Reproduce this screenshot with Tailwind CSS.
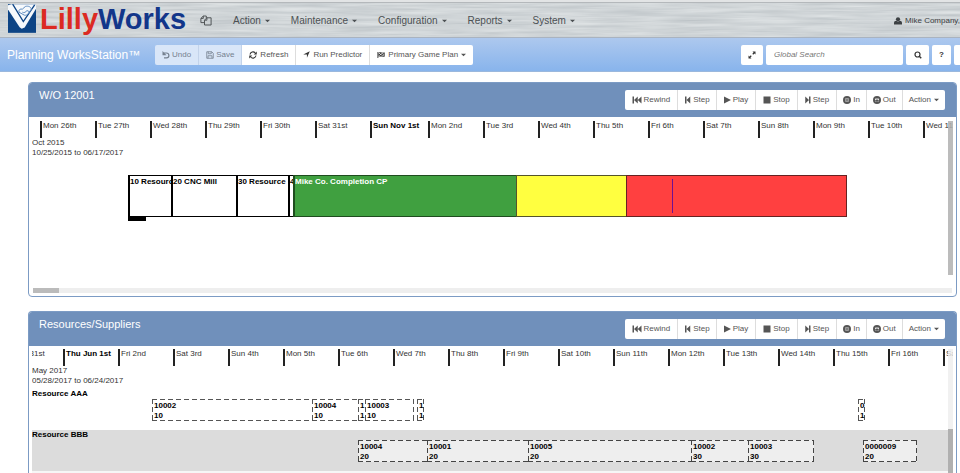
<!DOCTYPE html>
<html lang="en">
<head>
    <meta charset="UTF-8">
    <meta name="viewport" content="width=device-width, initial-scale=1.0">
    <title>LillyWorks - Planning WorksStation</title>
    <script src="https://cdn.jsdelivr.net/npm/@tailwindcss/browser@4"></script>
</head>

<body class="bg-white text-gray-700 font-['Liberation_Sans',Arial,sans-serif] text-[8px] leading-[10px] h-screen overflow-hidden">

    <!-- Icon sprite -->
    <svg class="hidden">
        <symbol id="i-caret" viewBox="0 0 6 4"><path d="M0 .5h6L3 3.5z"/></symbol>
        <symbol id="i-undo" viewBox="0 0 16 16"><path d="M4 4h5a4.800 4.800 0 0 1 0 9.600H4" fill="none" stroke="currentColor" stroke-width="2.400"/><path d="M1 0v8.500h8z"/></symbol>
        <symbol id="i-save" viewBox="0 0 16 16"><path d="M1.500 1.500h10l3 3v10h-13zM4.500 1.500v4h6v-4M4 14.500v-5h8v5" fill="none" stroke="currentColor" stroke-width="1.600"/></symbol>
        <symbol id="i-refresh" viewBox="0 0 16 16"><path d="M2 7a6 6 0 0 1 10.500-3M14 9A6 6 0 0 1 3.500 12" fill="none" stroke="currentColor" stroke-width="2.200"/><path d="M15.500 1v6h-6zM.5 15V9h6z"/></symbol>
        <symbol id="i-arrow" viewBox="0 0 16 16"><path d="M15.500.5 9 15.500V8H.5z"/></symbol>
        <symbol id="i-flag" viewBox="0 0 18 16"><path d="M1 1h2v14H1z"/><path d="M4 3c4-2.500 7 2 13 0v8c-6 2-9-2.500-13 0z" fill="none" stroke="currentColor" stroke-width="1.500"/><path d="M4 5.500h3v3H4zM7 3h3v3H7zM10 6h3v3h-3zM13 4h3v3h-3zM7 8h3v3H7zM13 9h3v2h-3z"/></symbol>
        <symbol id="i-rewind" viewBox="0 0 18 16"><path d="M0 1h3v14H0zM10.500 1v14L3 8zM18 1v14l-7.500-7z"/></symbol>
        <symbol id="i-back" viewBox="0 0 12 16"><path d="M1 1h3v14H1zM11.500 1v14L4 8z"/></symbol>
        <symbol id="i-fwd" viewBox="0 0 12 16"><path d="M8 1h3v14H8zM.5 1v14L8 8z"/></symbol>
        <symbol id="i-play" viewBox="0 0 14 16"><path d="M0 1v14l14-7z"/></symbol>
        <symbol id="i-stop" viewBox="0 0 16 16"><path d="M1 1h14v14H1z"/></symbol>
        <symbol id="i-in" viewBox="0 0 16 16"><circle cx="8" cy="8" r="6" fill="none" stroke="currentColor" stroke-width="4"/><path d="M7 4h2v3h3v2H9v3H7V9H4V7h3z"/></symbol>
        <symbol id="i-out" viewBox="0 0 16 16"><circle cx="8" cy="8" r="6" fill="none" stroke="currentColor" stroke-width="4"/><path d="M7 3h2v5h3.500L8 12.500 3.500 8H7z"/></symbol>
        <symbol id="i-search" viewBox="0 0 16 16"><circle cx="7" cy="7" r="5" fill="none" stroke="currentColor" stroke-width="2.400"/><path d="m10.500 10.500 4 4" stroke="currentColor" stroke-width="3"/></symbol>
        <symbol id="i-expand" viewBox="0 0 16 16"><path d="M9 1h6v6zM1 9v6h6z"/><path d="m3 13 3.500-3.500M9.500 6.500 13 3" stroke="currentColor" stroke-width="2.400"/></symbol>
        <symbol id="i-user" viewBox="0 0 16 16"><circle cx="8" cy="4.500" r="4.200"/><path d="M0 15v-3c0-3 2-4.500 4.500-4.500 2 1.800 5 1.800 7 0C14 7.500 16 9 16 12v3z"/></symbol>
        <symbol id="i-copy" viewBox="0 0 20 18"><path d="M5.500 1.500h5v3.500M1.500 12.500v-7l4-4v4h-4M1.500 12.500h6M11.500 4.500h7v12h-11v-8zM11.500 4.500v4h-4" fill="none" stroke="currentColor" stroke-width="1.600"/></symbol>
    </svg>

    <!-- Brushed metal header -->
    <header class="relative h-[38px] border-b border-[#a9b3c0] bg-[#cdd3d6] overflow-hidden">
        <svg class="absolute inset-0 w-full h-full" aria-hidden="true">
            <filter id="metal" x="0" y="0" width="100%" height="100%" color-interpolation-filters="sRGB">
                <feTurbulence type="fractalNoise" baseFrequency="0.015 0.35" numOctaves="3" seed="4"/>
                <feColorMatrix values=".16 0 0 0 .735  .15 0 0 0 .76  .14 0 0 0 .775  0 0 0 0 1"/>
            </filter>
            <rect width="100%" height="100%" filter="url(#metal)"/>
        </svg>
        <div class="relative flex items-center h-full pt-[2px] pl-2 border-t-2 border-[#e2e4e5] shadow-[inset_0_1px_0_#b4b8bb]">
            <a href="#" class="flex items-center self-start w-[192px] shrink-0">
                <svg class="w-7 h-[29px] mr-1" viewBox="0 0 84 86" aria-hidden="true">
                    <path fill="#0d4485" d="M0 0h84v86H0z"/>
                    <path fill="#f6f9fc" d="M0 3 10 0h74v14L50 70l-9 4-6-5L0 16z"/>
                    <path fill="none" stroke="#0d4485" stroke-width="4" d="M14 0 46 52 80 2"/>
                    <path fill="none" stroke="#5f8cc0" stroke-width="3" d="M33 24c-2-7 4-11 10-9l9-8c8-3 18 1 18 9l-9 12c-3 4-7 6-12 5zM43 24c6 4 10-1 14-5l8 4"/>
                </svg>
                <span class="text-[29px] leading-7 font-bold text-[#12368a]"><span class="text-[#dc2a22]">Lilly</span>Works</span>
            </a>
            <nav class="flex items-center gap-[21px] text-[10px] text-[#4c5053]">
                <a href="#" aria-label="Copy"><svg class="w-3 h-[11px] fill-current"><use href="#i-copy"/></svg></a>
                <a href="#" class="flex items-center gap-1">Action <svg class="w-[5px] h-1 fill-current"><use href="#i-caret"/></svg></a>
                <a href="#" class="flex items-center gap-1">Maintenance <svg class="w-[5px] h-1 fill-current"><use href="#i-caret"/></svg></a>
                <a href="#" class="flex items-center gap-1">Configuration <svg class="w-[5px] h-1 fill-current"><use href="#i-caret"/></svg></a>
                <a href="#" class="flex items-center gap-1">Reports <svg class="w-[5px] h-1 fill-current"><use href="#i-caret"/></svg></a>
                <a href="#" class="flex items-center gap-1">System <svg class="w-[5px] h-1 fill-current"><use href="#i-caret"/></svg></a>
            </nav>
            <a href="#" class="flex items-center gap-[3px] ml-auto text-[#3c4043]"><svg class="w-2 h-2 fill-current"><use href="#i-user"/></svg>Mike Company,</a>
        </div>
    </header>

    <!-- Workstation toolbar -->
    <div class="flex items-center h-[34px] pl-[7px] overflow-hidden bg-linear-to-b from-[#adc8ee] to-[#88b4ec] border-b border-[#9bb8dd]">
        <h1 class="w-[148px] shrink-0 text-[12px] leading-4 text-white whitespace-nowrap">Planning WorksStation™</h1>
        <div class="flex h-5 shrink-0 text-[#555]">
            <button class="flex items-center gap-[2px] px-[7px] rounded-l-xs border-r border-[#c3d3ea] bg-[#d9e6f8] text-[#75808f]"><svg class="w-2 h-2 fill-current"><use href="#i-undo"/></svg>Undo</button>
            <button class="flex items-center gap-[2px] px-[7px] border-r border-[#c3d3ea] bg-[#d9e6f8] text-[#75808f]"><svg class="w-2 h-2 fill-current"><use href="#i-save"/></svg>Save</button>
            <button class="flex items-center gap-[3px] px-[7px] border-r border-[#ddd] bg-white"><svg class="w-2 h-2 fill-current text-[#333]"><use href="#i-refresh"/></svg>Refresh</button>
            <button class="flex items-center gap-[3px] px-[7px] border-r border-[#ddd] bg-white"><svg class="w-[7px] h-[7px] fill-current text-[#333]"><use href="#i-arrow"/></svg>Run Predictor</button>
            <button class="flex items-center gap-[3px] px-[7px] rounded-r-xs bg-white"><svg class="w-2 h-2 fill-current text-[#333]"><use href="#i-flag"/></svg>Primary Game Plan <svg class="w-[5px] h-1 fill-current"><use href="#i-caret"/></svg></button>
        </div>
        <div class="flex h-5 shrink-0 gap-[3px] ml-auto text-[#333]">
            <button aria-label="Expand" class="flex items-center justify-center w-[22px] rounded-xs bg-white"><svg class="w-2 h-2 fill-current"><use href="#i-expand"/></svg></button>
            <input type="text" aria-label="Global Search" placeholder="Global Search" class="w-[137px] px-2 rounded-xs bg-white italic placeholder:text-[#777]">
            <button aria-label="Search" class="flex items-center justify-center w-[23px] rounded-xs bg-white"><svg class="w-2 h-2 fill-current"><use href="#i-search"/></svg></button>
            <button class="w-[19px] rounded-xs bg-white font-bold">?</button>
            <button aria-label="More" class="w-[6px] rounded-l-xs bg-white"></button>
        </div>
    </div>

    <main class="flex flex-col gap-[14px] pt-[10px] pl-7 pr-[3px]">

        <!-- Work order -->
        <section class="rounded-sm border border-[#7c9bc4] bg-white overflow-hidden">
            <div class="flex items-start justify-between h-[34px] pl-[10px] pr-[11px] pt-[7px] bg-[#7090bb]">
                <h2 class="text-[11px] leading-[11px] text-white">W/O 12001</h2>
                <div class="flex h-5 rounded-xs bg-white text-[#555] divide-x divide-[#ddd]">
                    <button class="flex items-center gap-[2px] px-[7px]"><svg class="w-[10px] h-2 fill-current"><use href="#i-rewind"/></svg>Rewind</button>
                    <button class="flex items-center gap-[2px] px-[6px]"><svg class="w-[7px] h-2 fill-current"><use href="#i-back"/></svg>Step</button>
                    <button class="flex items-center gap-[2px] px-[7px]"><svg class="w-[7px] h-2 fill-current"><use href="#i-play"/></svg>Play</button>
                    <button class="flex items-center gap-[2px] px-[7px]"><svg class="w-2 h-2 fill-current"><use href="#i-stop"/></svg>Stop</button>
                    <button class="flex items-center gap-[2px] px-[7px]"><svg class="w-[6px] h-2 fill-current"><use href="#i-fwd"/></svg>Step</button>
                    <button class="flex items-center gap-[2px] px-[6px]"><svg class="w-2 h-2 fill-current"><use href="#i-in"/></svg>In</button>
                    <button class="flex items-center gap-[2px] px-[6px]"><svg class="w-2 h-2 fill-current"><use href="#i-out"/></svg>Out</button>
                    <button class="flex items-center gap-[3px] px-[6px]">Action <svg class="w-[5px] h-1 fill-current"><use href="#i-caret"/></svg></button>
                </div>
            </div>

            <div class="relative mx-[3px] mt-1 h-[175px] overflow-hidden">
                <div class="flex h-[17px] pl-2 text-[#333] whitespace-nowrap *:shrink-0 *:w-[55px] *:border-l-2 *:border-[#222] *:pl-px">
                    <div>Mon 26th</div>
                    <div>Tue 27th</div>
                    <div>Wed 28th</div>
                    <div>Thu 29th</div>
                    <div>Fri 30th</div>
                    <div>Sat 31st</div>
                    <div class="font-bold text-black min-w-[58px]">Sun Nov 1st</div>
                    <div>Mon 2nd</div>
                    <div>Tue 3rd</div>
                    <div>Wed 4th</div>
                    <div>Thu 5th</div>
                    <div>Fri 6th</div>
                    <div>Sat 7th</div>
                    <div>Sun 8th</div>
                    <div>Mon 9th</div>
                    <div>Tue 10th</div>
                    <div>Wed 11th</div>
                </div>
                <p class="text-[#333]">Oct 2015<br>10/25/2015 to 06/17/2017</p>

                <!-- Operations followed by the green / yellow / red buffer -->
                <div class="flex w-max mt-[17px] ml-24 h-[42px] font-bold text-black whitespace-nowrap *:overflow-hidden *:pt-px">
                    <div class="w-[43px] border-y border-l-2 border-black">10 Resource</div>
                    <div class="w-[65px] border-y border-l-2 border-black">20 CNC Mill</div>
                    <div class="w-[52px] border-y border-l-2 border-black">30 Resource</div>
                    <div class="w-[5px] border-y border-l-2 border-black">4</div>
                    <div class="w-[223px] border-y border-l-2 border-[#1f4d1f] bg-[#40a040] text-white">Mike Co. Completion CP</div>
                    <div class="w-[110px] border-y border-l border-[#55552a] bg-[#ffff40]"></div>
                    <div class="w-[221px] border border-[#662222] bg-[#ff4040]"><div class="ml-[45px] mt-[2px] w-px h-[34px] bg-[#701090]"></div></div>
                </div>
                <div class="ml-24 w-[18px] h-1 bg-black"></div>

                <!-- Scrollbars -->
                <div class="absolute right-0 top-0 w-[5px] h-[154px] bg-[#b0b0b0]/85"></div>
                <div class="absolute inset-x-px bottom-[3px] h-[5px] bg-[#eee]"><div class="w-[26px] h-full bg-[#bbb]"></div></div>
            </div>
        </section>

        <!-- Resources -->
        <section class="rounded-t-sm border border-b-0 border-[#7c9bc4] bg-white overflow-hidden">
            <div class="flex items-start justify-between h-[34px] pl-[10px] pr-[11px] pt-[7px] bg-[#7090bb]">
                <h2 class="text-[11px] leading-[11px] text-white">Resources/Suppliers</h2>
                <div class="flex h-5 rounded-xs bg-white text-[#555] divide-x divide-[#ddd]">
                    <button class="flex items-center gap-[2px] px-[7px]"><svg class="w-[10px] h-2 fill-current"><use href="#i-rewind"/></svg>Rewind</button>
                    <button class="flex items-center gap-[2px] px-[6px]"><svg class="w-[7px] h-2 fill-current"><use href="#i-back"/></svg>Step</button>
                    <button class="flex items-center gap-[2px] px-[7px]"><svg class="w-[7px] h-2 fill-current"><use href="#i-play"/></svg>Play</button>
                    <button class="flex items-center gap-[2px] px-[7px]"><svg class="w-2 h-2 fill-current"><use href="#i-stop"/></svg>Stop</button>
                    <button class="flex items-center gap-[2px] px-[7px]"><svg class="w-[6px] h-2 fill-current"><use href="#i-fwd"/></svg>Step</button>
                    <button class="flex items-center gap-[2px] px-[6px]"><svg class="w-2 h-2 fill-current"><use href="#i-in"/></svg>In</button>
                    <button class="flex items-center gap-[2px] px-[6px]"><svg class="w-2 h-2 fill-current"><use href="#i-out"/></svg>Out</button>
                    <button class="flex items-center gap-[3px] px-[6px]">Action <svg class="w-[5px] h-1 fill-current"><use href="#i-caret"/></svg></button>
                </div>
            </div>

            <div class="relative mx-[3px] mt-[3px] overflow-hidden">
                <div class="flex h-[17px] -ml-6 text-[#333] whitespace-nowrap *:shrink-0 *:w-[55px] *:border-l-2 *:border-[#222] *:pl-px">
                    <div>Wed 31st</div>
                    <div class="font-bold text-black">Thu Jun 1st</div>
                    <div>Fri 2nd</div>
                    <div>Sat 3rd</div>
                    <div>Sun 4th</div>
                    <div>Mon 5th</div>
                    <div>Tue 6th</div>
                    <div>Wed 7th</div>
                    <div>Thu 8th</div>
                    <div>Fri 9th</div>
                    <div>Sat 10th</div>
                    <div>Sun 11th</div>
                    <div>Mon 12th</div>
                    <div>Tue 13th</div>
                    <div>Wed 14th</div>
                    <div>Thu 15th</div>
                    <div>Fri 16th</div>
                    <div>Sat 17th</div>
                </div>
                <p class="text-[#333]">May 2017<br>05/28/2017 to 06/24/2017</p>

                <!-- One lane per resource, jobs placed on the time scale -->
                <div class="relative h-11 pt-[3px] text-black font-bold">
                    Resource AAA
                    <div class="*:absolute *:top-[13px] *:h-[22px] *:pl-[2px] *:pt-[2px] *:overflow-hidden *:[background:repeating-linear-gradient(90deg,#555_0_5px,transparent_5px_8px)_top/100%_1px_no-repeat,repeating-linear-gradient(90deg,#555_0_5px,transparent_5px_8px)_bottom/100%_1px_no-repeat,repeating-linear-gradient(#555_0_5px,transparent_5px_8px)_left/1px_100%_no-repeat,repeating-linear-gradient(#555_0_5px,transparent_5px_8px)_right/1px_100%_no-repeat,#fff]">
                        <div class="left-[120px] w-[161px]">10002<br>10</div>
                        <div class="left-[280px] w-[47px]">10004<br>10</div>
                        <div class="left-[326px] w-2">1<br>1</div>
                        <div class="left-[333px] w-[49px]">10003<br>10</div>
                        <div class="left-[385px] w-[7px]">1<br>1</div>
                        <div class="left-[826px] w-[7px]">0<br>1</div>
                    </div>
                </div>
                <div class="relative h-[41px] text-black font-bold bg-[#dcdcdc]">
                    Resource BBB
                    <div class="*:absolute *:top-[10px] *:h-[22px] *:pl-[2px] *:pt-[2px] *:overflow-hidden *:[background:repeating-linear-gradient(90deg,#444_0_5px,transparent_5px_8px)_top/100%_1px_no-repeat,repeating-linear-gradient(90deg,#444_0_5px,transparent_5px_8px)_bottom/100%_1px_no-repeat,repeating-linear-gradient(#444_0_5px,transparent_5px_8px)_left/1px_100%_no-repeat,repeating-linear-gradient(#444_0_5px,transparent_5px_8px)_right/1px_100%_no-repeat,#eee]">
                        <div class="left-[326px] w-[70px]">10004<br>20</div>
                        <div class="left-[395px] w-[102px]">10001<br>20</div>
                        <div class="left-[496px] w-[164px]">10005<br>20</div>
                        <div class="left-[659px] w-[58px]">10002<br>30</div>
                        <div class="left-[716px] w-[66px]">10003<br>30</div>
                        <div class="left-[831px] w-[54px]">0000009<br>20</div>
                    </div>
                </div>
                <div class="h-[2px] bg-[#f6f6f6]"></div>

                <!-- Scrollbar -->
                <div class="absolute right-0 inset-y-0 w-[5px] pt-20 bg-[#eee]/80"><div class="h-full bg-[#b0b0b0]"></div></div>
            </div>
        </section>
    </main>
</body>
</html>
